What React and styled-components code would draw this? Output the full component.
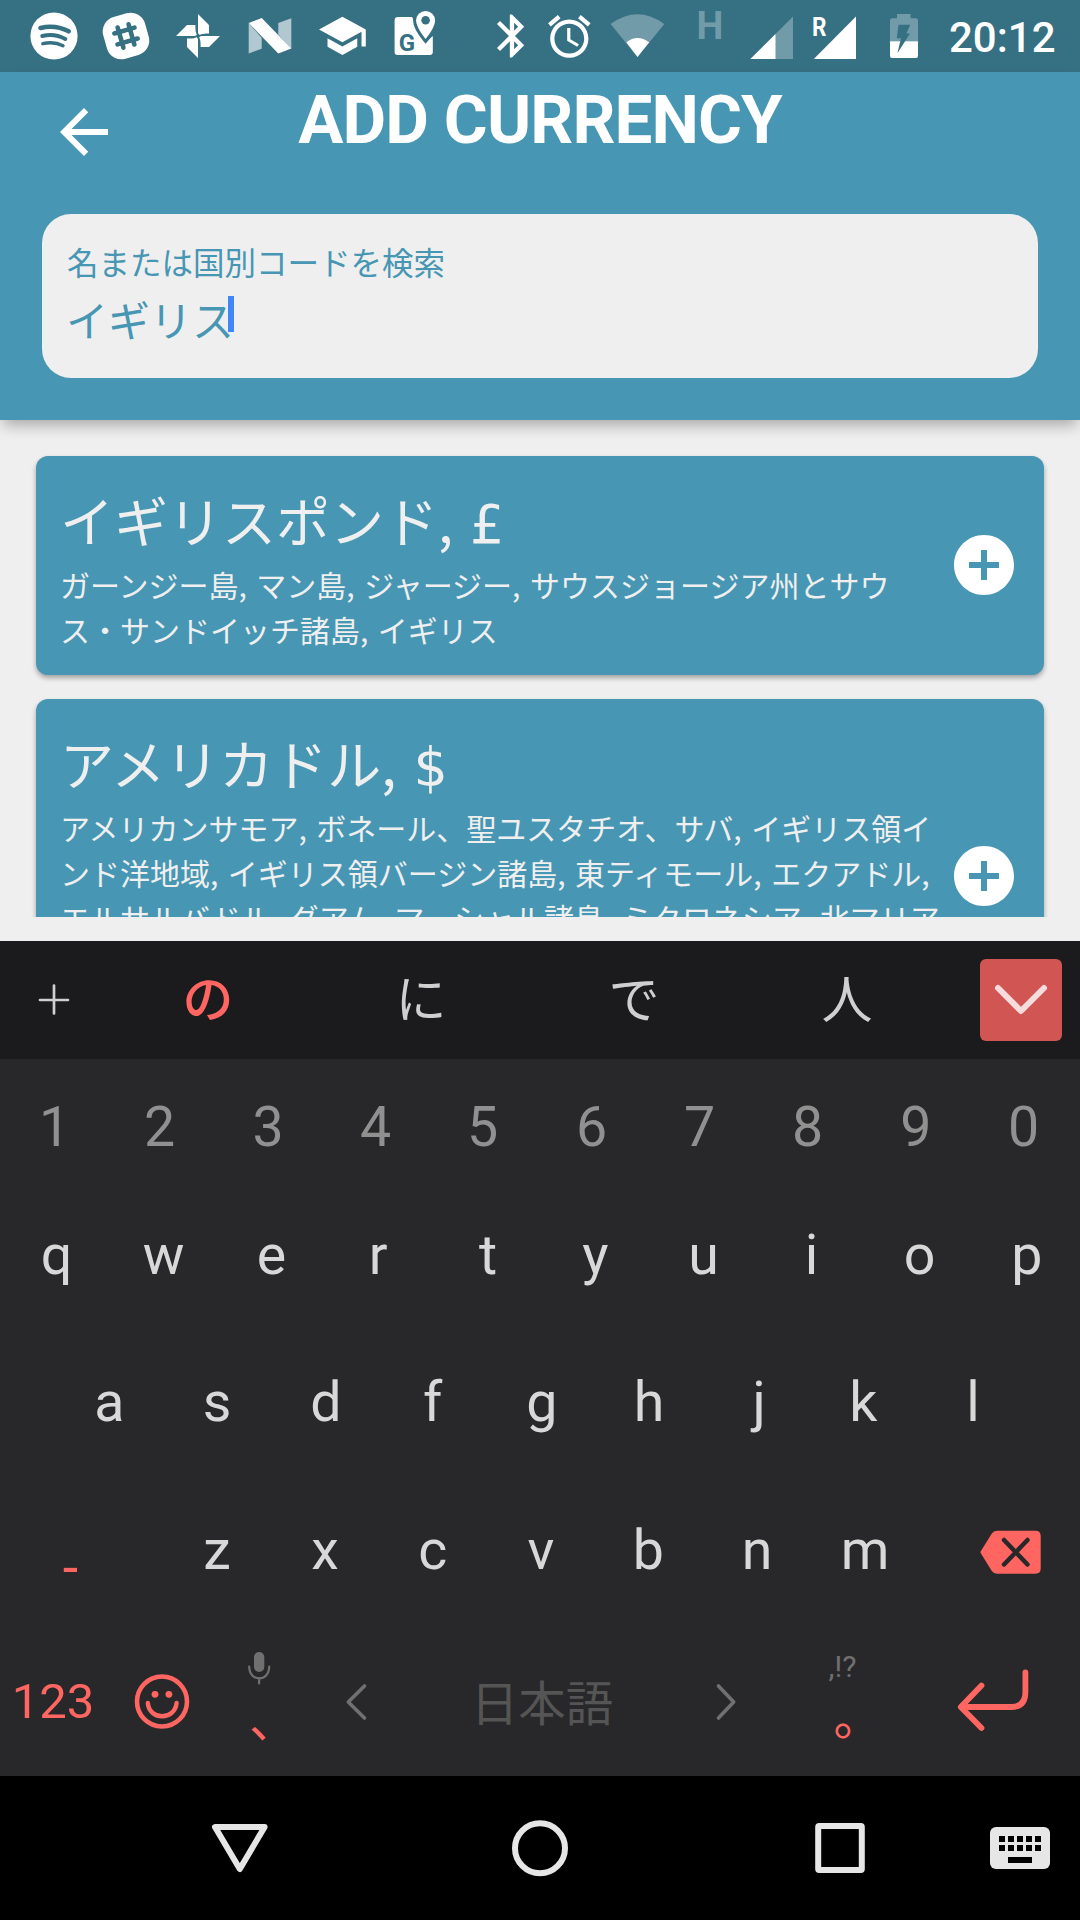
import React from "react";
import styled, { createGlobalStyle } from "styled-components";

const TEAL = "#4796b3";
const TEAL_DARK = "#367083";
const PAPER = "#efefef";
const CORAL = "#ff6661";
const CJK = `"Noto Sans CJK JP", sans-serif`;
const LATIN = `Roboto, "Noto Sans CJK JP", sans-serif`;

const GlobalStyle = createGlobalStyle`
  * { box-sizing: border-box; }
  body { margin: 0; background: #000; font-family: ${LATIN}; }
`;

const Screen = styled.div`
  width: 1080px;
  height: 1920px;
  display: flex;
  flex-direction: column;
  overflow: hidden;
  background: ${PAPER};
`;

/* ---------- shared icon slot: `from` and `top` are the screen origin of its drawing ---------- */
const SlotSvg = styled.svg`
  display: block;
  flex: none;
`;
const Slot = ({ from, top = 0, width, height = 72, children }) => (
  <SlotSvg width={width} height={height} viewBox={`${from} ${top} ${width} ${height}`} fill="none">
    {children}
  </SlotSvg>
);

/* ---------- status bar ---------- */
const StatusBar = styled.div`
  flex: none;
  height: 72px;
  display: flex;
  padding-left: 18px;
  background: ${TEAL_DARK};
`;
const Clock = styled.span`
  flex: 1;
  padding-left: 14px;
  color: #fff;
  font: 500 42px/75px ${LATIN};
`;

const Blade = "M0-22L11-11V-2.6H9Q3-2.6 1.6-1L0-3Z";

const StatusIcons = () => (
  <>
    <Slot from={18} width={72}>
      <circle cx="54" cy="36" r="23.6" fill="#fff" />
      <g stroke={TEAL_DARK} strokeLinecap="round">
        <path d="M40.5 28Q55 24.3 68.7 31.3" strokeWidth="4.6" />
        <path d="M42.3 36Q54.5 33 65.3 39" strokeWidth="4" />
        <path d="M42.8 43.7Q54 41 63 45.7" strokeWidth="3.4" />
      </g>
    </Slot>
    <Slot from={90} width={72}>
      <g transform="rotate(-16 126 36)">
        <rect x="104.3" y="14.3" width="43.4" height="43.4" rx="15" fill="#fff" />
        <path
          d="M120.300 25.500V46.500M131.700 25.500V46.500M115.500 30.300H136.500M115.500 41.700H136.500"
          stroke={TEAL_DARK}
          strokeWidth="4.6"
          strokeLinecap="round"
        />
      </g>
    </Slot>
    <Slot from={162} width={72}>
      <g fill="#fff">
        {[0, 90, 180, 270].map((a) => (
          <path key={a} d={Blade} transform={`translate(198 36) rotate(${a})`} />
        ))}
      </g>
    </Slot>
    <Slot from={234} width={72}>
      <g fill="#fff">
        <path d="M248.7 23V53.5L261.7 48.8V38Z" opacity=".62" />
        <path d="M278.3 23L291.3 18.3V49L278.3 34.5Z" opacity=".62" />
        <path d="M248.7 23L261.7 18L291.3 48.6L278.3 53.5Z" />
      </g>
    </Slot>
    <Slot from={306} width={72}>
      <path
        transform="translate(316.9 10.3) scale(2.125)"
        fill="#fff"
        d="M5 13.18v4L12 21l7-3.82v-4L12 17l-7-3.82zM12 3L1 9l11 6 9-4.91V17h2V9L12 3z"
      />
    </Slot>
    <Slot from={378} width={102}>
      <path d="M398 17H412L426 42L432.8 36V52a3 3 0 0 1-3 3H397.6a3 3 0 0 1-3-3V20.4a3.4 3.4 0 0 1 3.4-3.4Z" fill="#fff" />
      <path
        d="M425.6 11a9.5 9.5 0 0 1 9.5 9.5C435.1 27.5 425.6 39 425.6 39S416.1 27.5 416.1 20.5A9.5 9.5 0 0 1 425.6 11Z"
        fill="#fff"
        stroke={TEAL_DARK}
        strokeWidth="6"
        paintOrder="stroke"
      />
      <circle cx="425.6" cy="20.3" r="4.3" fill={TEAL_DARK} />
      <text x="398.8" y="50.7" fill={TEAL_DARK} fontFamily="Roboto, sans-serif" fontWeight="700" fontSize="24">
        G
      </text>
    </Slot>
    <Slot from={480} width={60}>
      <path
        transform="translate(486.3 10.3) scale(2.14)"
        fill="#fff"
        d="M17.71 7.71L12 2h-1v7.59L6.41 5 5 6.41 10.59 12 5 17.59 6.41 19 11 14.41V22h1l5.71-5.71-4.3-4.29 4.3-4.29zM13 5.83l1.88 1.88L13 9.59V5.83zm1.88 10.46L13 18.17v-3.76l1.88 1.88z"
      />
    </Slot>
    <Slot from={540} width={60}>
      <path
        transform="translate(543.8 11) scale(2.125)"
        fill="#fff"
        d="M22 5.72l-4.6-3.86-1.29 1.53 4.6 3.86L22 5.72zM7.88 3.39L6.6 1.86 2 5.71l1.29 1.53 4.59-3.85zM12.5 8H11v6l4.75 2.85.75-1.23-4-2.37V8zM12 4c-4.97 0-9 4.03-9 9s4.02 9 9 9c4.97 0 9-4.03 9-9s-4.03-9-9-9zm0 16c-3.87 0-7-3.13-7-7s3.13-7 7-7 7 3.13 7 7-3.13 7-7 7z"
      />
    </Slot>
    <Slot from={600} width={84}>
      <path d="M637.5 57L610.6 24Q637.5 4.5 664.3 24Z" fill="#729ba9" />
      <path d="M637.5 57L626.3 42.3Q637.5 33.5 649.2 42.3Z" fill="#fff" />
    </Slot>
    <Slot from={684} width={56}>
      <text x="696.5" y="39" fill="#729ba9" fontFamily="Roboto, sans-serif" fontWeight="700" fontSize="38">
        H
      </text>
    </Slot>
    <Slot from={740} width={64}>
      <path d="M793 16.5V59H750.4Z" fill="#729ba9" />
      <path d="M775.5 34V59H750.4Z" fill="#fff" />
    </Slot>
    <Slot from={804} width={70}>
      <path d="M856 16.5V59H813.8Z" fill="#fff" />
      <text x="812" y="35.5" fill="#fff" fontFamily="Roboto, sans-serif" fontWeight="700" fontSize="25" textLength="14.5" lengthAdjust="spacingAndGlyphs">
        R
      </text>
    </Slot>
    <Slot from={874} width={61}>
      <path d="M890 41.3V20.5a2.3 2.3 0 0 1 2.3-2.3H897V14H910.6V18.2H915.7a2.3 2.3 0 0 1 2.3 2.3V41.3Z" fill="#729ba9" />
      <path d="M890 41.3H918V56a2 2 0 0 1-2 2H892a2 2 0 0 1-2-2Z" fill="#fff" />
      <path d="M898.5 24.7H910.2L906.4 33.6H910L897.4 53.3L901 38.3H896.8Z" fill={TEAL_DARK} />
    </Slot>
  </>
);

/* ---------- header ---------- */
const Header = styled.header`
  flex: none;
  position: relative;
  z-index: 1;
  height: 348px;
  background: ${TEAL};
  box-shadow: 0 8px 14px -3px rgba(0, 0, 0, 0.3);
`;
const Toolbar = styled.div`
  height: 142px;
  display: grid;
  grid-template-columns: 168px 1fr 168px;
  align-items: start;
`;
const BackButton = styled.div`
  padding: 24px 0 0 48px;
`;
const Title = styled.h1`
  margin: 8px 0 0;
  color: #fff;
  text-align: center;
  white-space: nowrap;
  letter-spacing: -0.9px;
  font: 700 67.2px/80px ${LATIN};
`;
const SearchBox = styled.div`
  height: 164px;
  margin: 0 42px;
  padding: 28px 24px;
  border-radius: 29px;
  background: ${PAPER};
  color: ${TEAL};
  font-family: ${CJK};
`;
const SearchLabel = styled.div`
  padding-left: 1px;
  font-size: 31.5px;
  line-height: 38px;
`;
const SearchValue = styled.div`
  position: relative;
  width: max-content;
  margin-top: 10px;
  font-size: 42px;
  line-height: 58px;
`;
const Caret = styled.span`
  position: absolute;
  right: 0;
  top: 6px;
  width: 6px;
  height: 36px;
  background: #4086f7;
`;

/* ---------- currency list ---------- */
const List = styled.main`
  flex: none;
  height: 497px;
  padding: 36px 36px 0;
  display: flex;
  flex-direction: column;
  gap: 24px;
  overflow: hidden;
`;
const Card = styled.article`
  flex: none;
  display: flex;
  align-items: center;
  justify-content: space-between;
  padding: 22px 24px 23px;
  border-radius: 12px;
  background: ${TEAL};
  color: ${PAPER};
  font-family: ${CJK};
  box-shadow: 0 3px 5px rgba(0, 0, 0, 0.32);
`;
const CardTitle = styled.h2`
  margin: 0;
  font-weight: 400;
  font-size: 54px;
  line-height: 83px;
  word-spacing: 5px;
`;
const Symbol = styled.span`
  font-family: "DejaVu Sans", sans-serif;
  line-height: 1;
`;
const Countries = styled.p`
  margin: 1px 0 0;
  height: ${(p) => p.$lines * 45}px;
  font-size: 30px;
  line-height: 45px;
  word-spacing: 2.8px;
  white-space: pre;
`;

const AddIcon = () => (
  <SlotSvg width="72" height="72" viewBox="0 0 24 24">
    <path fill="#fff" d="M12 2C6.48 2 2 6.48 2 12s4.48 10 10 10 10-4.48 10-10S17.52 2 12 2zm5 11h-4v4h-2v-4H7v-2h4V7h2v4h4v2z" />
  </SlotSvg>
);

const currencies = [
  {
    name: "イギリスポンド",
    symbol: "£",
    lines: 2,
    countries: "ガーンジー島, マン島, ジャージー, サウスジョージア州とサウ\nス・サンドイッチ諸島, イギリス",
  },
  {
    name: "アメリカドル",
    symbol: "$",
    lines: 5,
    countries:
      "アメリカンサモア, ボネール、聖ユスタチオ、サバ, イギリス領イ\nンド洋地域, イギリス領バージン諸島, 東ティモール, エクアドル,\nエルサルバドル, グアム, マーシャル諸島, ミクロネシア, 北マリア",
  },
];

/* ---------- keyboard ---------- */
const ListFooter = styled.div`
  flex: none;
  height: 24px;
`;
const Suggestions = styled.div`
  flex: none;
  height: 118px;
  display: flex;
  align-items: center;
  background: #1b1b1d;
`;
const Candidate = styled.span`
  width: 213px;
  padding: 0 1px 8px 0;
  text-align: center;
  color: ${(p) => (p.$active ? CORAL : "#cfcfcf")};
  font: ${(p) => (p.$active ? 500 : 400)} 51px/60px ${CJK};
`;
const CollapseButton = styled.div`
  width: 82px;
  height: 82px;
  margin-left: 26px;
  border-radius: 6px;
  background: #d15653;
`;
const Keyboard = styled.div`
  flex: none;
  height: 717px;
  background: #28282a;
`;
const KeyRow = styled.div`
  display: flex;
  justify-content: ${(p) => p.$justify || "center"};
  height: ${(p) => p.$height}px;
  padding: ${(p) => p.$pad || "0"};
`;
const Key = styled.span`
  flex: none;
  display: flex;
  align-items: center;
  justify-content: center;
  width: ${(p) => p.$width || 108}px;
  color: ${(p) => p.$color || "#d8d8d8"};
  font-family: ${LATIN};
  font-size: ${(p) => p.$size || 55.5}px;
  transform: translateX(${(p) => p.$nudge || 0}px);
`;
const MinusKey = styled(Key)`
  margin-right: 22px;
  padding-top: 36px;
`;
const ModeKey = styled(Key)`
  padding: 2px 2px 0 0;
`;
const StackKey = styled.div`
  flex: none;
  width: ${(p) => p.$width}px;
  padding-top: 25px;
  display: flex;
  flex-direction: column;
  align-items: center;
  gap: ${(p) => p.$gap}px;
`;
const Hint = styled.span`
  color: #707070;
  font: 400 30px/36px ${LATIN};
`;
const Mark = styled.span`
  padding-left: ${(p) => p.$indent}px;
  color: ${CORAL};
  font: 400 48px/48px ${CJK};
`;
const NavBar = styled.nav`
  flex: none;
  height: 144px;
  display: flex;
  background: #000;
`;

/* Optical centring: shifts each glyph so that its ink, not its advance, is centred. */
const nudges = {
  1: 3.2, 3: 0.6, 5: -0.8, 9: 0.4,
  q: 1, r: -1.4, t: 0.6, p: -0.6,
  a: 0.4, d: 1, f: -0.3, g: 0.8, j: 2.2, k: -1.6,
  c: -0.3, b: -0.6,
};
const Keys = ({ chars, color }) =>
  chars.split("").map((k) => (
    <Key key={k} $color={color} $nudge={nudges[k]}>
      {k}
    </Key>
  ));

const NavIcons = () => (
  <>
    <Slot from={90} top={1776} width={300} height={144}>
      <path d="M215 1827H264.6L239.8 1869Z" stroke="#e6e6e6" strokeWidth="6" strokeLinejoin="round" />
    </Slot>
    <Slot from={390} top={1776} width={300} height={144}>
      <circle cx="540" cy="1848.3" r="25" stroke="#e6e6e6" strokeWidth="6" />
    </Slot>
    <Slot from={690} top={1776} width={270} height={144}>
      <rect x="818.2" y="1826" width="43.6" height="44" rx="1" stroke="#e6e6e6" strokeWidth="6" />
    </Slot>
    <Slot from={960} top={1776} width={120} height={144}>
      <rect x="990" y="1827" width="60" height="42" rx="6" fill="#e6e6e6" />
      {[0, 1, 2, 3, 4].map((i) => (
        <path key={i} d={`M${999 + i * 9} 1836h6v6h-6zM${999 + i * 9} 1845h6v6h-6z`} fill="#000" />
      ))}
      <rect x="1008" y="1857" width="24" height="6" fill="#000" />
    </Slot>
  </>
);

export default function App() {
  return (
    <Screen>
      <GlobalStyle />
      <StatusBar>
        <StatusIcons />
        <Clock>20:12</Clock>
      </StatusBar>

      <Header>
        <Toolbar>
          <BackButton>
            <SlotSvg width="72" height="72" viewBox="0 0 24 24">
              <path fill="#fff" d="M20 11H7.83l5.59-5.59L12 4l-8 8 8 8 1.41-1.41L7.83 13H20v-2z" />
            </SlotSvg>
          </BackButton>
          <Title>ADD CURRENCY</Title>
        </Toolbar>
        <SearchBox>
          <SearchLabel>名または国別コードを検索</SearchLabel>
          <SearchValue>
            イギリス
            <Caret />
          </SearchValue>
        </SearchBox>
      </Header>

      <List>
        {currencies.map((c) => (
          <Card key={c.name}>
            <div>
              <CardTitle>
                {c.name}, <Symbol>{c.symbol}</Symbol>
              </CardTitle>
              <Countries $lines={c.lines}>{c.countries}</Countries>
            </div>
            <AddIcon />
          </Card>
        ))}
      </List>
      <ListFooter />

      <Suggestions>
        <Slot from={0} top={941} width={102} height={118}>
          <path d="M40 1000H68M54 985.5V1013.5" stroke="#cfcfcf" strokeWidth="2.7" strokeLinecap="round" />
        </Slot>
        <Candidate $active>の</Candidate>
        <Candidate>に</Candidate>
        <Candidate>で</Candidate>
        <Candidate>人</Candidate>
        <CollapseButton>
          <Slot from={980} top={959} width={82} height={82}>
            <path d="M998 988L1021 1011L1044 988" stroke="#f6dcdc" strokeWidth="6" strokeLinecap="round" strokeLinejoin="round" />
          </Slot>
        </CollapseButton>
      </Suggestions>

      <Keyboard>
        <KeyRow $height={122} $pad="14px 5px 0 0">
          <Keys chars="1234567890" color="#909090" />
        </KeyRow>
        <KeyRow $height={148} $pad="0 0 0 3px">
          <Keys chars="qwertyuiop" />
        </KeyRow>
        <KeyRow $height={147} $pad="0 0 0 2px">
          <Keys chars="asdfghjkl" />
        </KeyRow>
        <KeyRow $height={148} $justify="flex-start">
          <MinusKey $width={141} $color={CORAL}>-</MinusKey>
          <Keys chars="zxcvbnm" />
          <Slot from={919} top={1476} width={161} height={148}>
            <path d="M982.5 1552.2L993.5 1569.9Q994.700 1571.7 997 1571.7H1035.5Q1038.700 1571.7 1038.7 1568.5V1536Q1038.7 1532.7 1035.5 1532.7H997Q994.700 1532.7 993.5 1534.5Z" fill={CORAL} stroke={CORAL} strokeWidth="4" strokeLinejoin="round" />
            <path d="M1004 1540L1027.5 1564.5M1027.5 1540L1004 1564.5" stroke="#28282a" strokeWidth="4.5" strokeLinecap="round" />
          </Slot>
        </KeyRow>
        <KeyRow $height={152} $justify="flex-start">
          <ModeKey $color={CORAL} $size={49}>123</ModeKey>
          <Slot from={108} top={1624} width={108} height={152}>
            <g stroke={CORAL} strokeLinecap="round">
              <circle cx="162" cy="1701.5" r="25" strokeWidth="4.6" />
              <path d="M147.8 1703C149.5 1720.7 174.7 1720.7 176.6 1703" strokeWidth="4.4" />
            </g>
            <circle cx="155" cy="1694.3" r="3.4" fill={CORAL} />
            <circle cx="168.9" cy="1694.3" r="3.4" fill={CORAL} />
          </Slot>
          <StackKey $width={86} $gap={7}>
            <Slot from={216} top={1649} width={86} height={36}>
              <rect x="254" y="1652" width="10.3" height="20" rx="5.1" fill="#707070" />
              <path d="M249.2 1666.5C249.2 1682.3 269.2 1682.3 269.2 1666.5M259.1 1678V1683.5" stroke="#707070" strokeWidth="2.2" strokeLinecap="round" />
            </Slot>
            <Mark $indent={28}>、</Mark>
          </StackKey>
          <Slot from={302} top={1624} width={108} height={152}>
            <path d="M364.5 1686L348.3 1702L364.5 1718" stroke="#707070" strokeWidth="3.6" strokeLinecap="round" strokeLinejoin="round" />
          </Slot>
          <Key $width={264} $color="#555" $size={47.5}>日本語</Key>
          <Slot from={674} top={1624} width={106} height={152}>
            <path d="M718.5 1686L733.7 1702L718.5 1718" stroke="#707070" strokeWidth="3.6" strokeLinecap="round" strokeLinejoin="round" />
          </Slot>
          <StackKey $width={125} $gap={5}>
            <Hint>,!?</Hint>
            <Mark $indent={30}>。</Mark>
          </StackKey>
          <Slot from={905} top={1624} width={175} height={152}>
            <path d="M1025.4 1672.5V1692Q1025.4 1707 1011 1707H961M981.5 1685.5L960.8 1707L981.5 1728" stroke={CORAL} strokeWidth="5.8" strokeLinecap="round" strokeLinejoin="round" />
          </Slot>
        </KeyRow>
      </Keyboard>

      <NavBar>
        <Slot from={0} top={1776} width={90} height={144} />
        <NavIcons />
      </NavBar>
    </Screen>
  );
}
